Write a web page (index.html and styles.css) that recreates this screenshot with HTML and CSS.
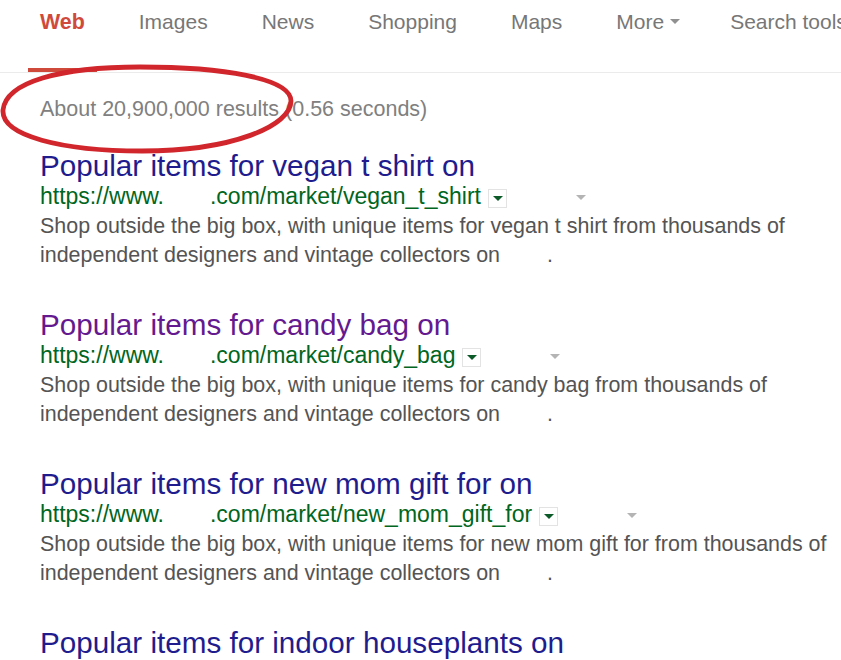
FILE: index.html
```html
<!DOCTYPE html>
<html lang="en">
<head>
    <meta charset="UTF-8">
    <meta name="viewport" content="width=device-width, initial-scale=1.0">
    <title>vegan t shirt - Search</title>
    <link rel="stylesheet" href="styles.css">
</head>
<body>
    <div class="tabs">
        <a class="tab selected">Web</a>
        <a class="tab">Images</a>
        <a class="tab">News</a>
        <a class="tab">Shopping</a>
        <a class="tab">Maps</a>
        <a class="tab more">More<span class="caret"></span></a>
        <a class="tab">Search tools</a>
    </div>

    <div class="results">
        <div class="stats">About 20,900,000 results (0.56 seconds)</div>

        <div class="result">
            <h3 class="title">Popular items for vegan t shirt on</h3>
            <div class="url">https://www.<span class="blank"></span>.com/market/vegan_t_shirt<span class="menu"><span class="arrow"></span></span><span class="gap"></span><span class="arrow light"></span></div>
            <p class="snippet">Shop outside the big box, with unique items for vegan t shirt from thousands of<br><span>independent designers and vintage collectors on</span><span class="blank"></span>.</p>
        </div>

        <div class="result">
            <h3 class="title visited">Popular items for candy bag on</h3>
            <div class="url">https://www.<span class="blank"></span>.com/market/candy_bag<span class="menu"><span class="arrow"></span></span><span class="gap"></span><span class="arrow light"></span></div>
            <p class="snippet">Shop outside the big box, with unique items for candy bag from thousands of<br><span>independent designers and vintage collectors on</span><span class="blank"></span>.</p>
        </div>

        <div class="result">
            <h3 class="title">Popular items for new mom gift for on</h3>
            <div class="url">https://www.<span class="blank"></span>.com/market/new_mom_gift_for<span class="menu"><span class="arrow"></span></span><span class="gap"></span><span class="arrow light"></span></div>
            <p class="snippet">Shop outside the big box, with unique items for new mom gift for from thousands of<br><span>independent designers and vintage collectors on</span><span class="blank"></span>.</p>
        </div>

        <div class="result">
            <h3 class="title">Popular items for indoor houseplants on</h3>
        </div>
    </div>

    <!-- hand drawn circle around the result count -->
    <svg class="scribble" width="841" height="660" viewBox="0 0 841 660">
        <path d="M3 110 C6 82 60 67 140 67 C222 67 291 78 291 101 C291 126 232 151 142 151 C62 151 1 136 3 110 Z"
              fill="none" stroke="#d0262c" stroke-width="4.8" stroke-linecap="round"/>
    </svg>
</body>
</html>
```

FILE: styles.css
```css
* {
    margin: 0;
    padding: 0;
    box-sizing: border-box;
}

body {
    font-family: "Liberation Sans", Arial, sans-serif;
    background: #fff;
    position: relative;
    overflow: hidden;
    height: 660px;
}

.tabs {
    display: flex;
    padding-left: 28px;
    border-bottom: 1px solid #ebebeb;
    white-space: nowrap;
}

.tab {
    display: block;
    height: 72px;
    padding: 0 12px;
    margin-right: 30px;
    font-size: 21px;
    line-height: 44px;
    color: #777;
}

.tab.selected {
    color: #d04a3c;
    font-weight: bold;
    font-size: 21.4px;
    border-bottom: 4px solid #d04a3c;
}

.tab.more {
    margin-right: 26px;
}

.caret {
    display: inline-block;
    margin-left: 6px;
    vertical-align: middle;
    border-top: 5px solid #909090;
    border-left: 5px solid transparent;
    border-right: 5px solid transparent;
    position: relative;
    top: -2px;
}

.results {
    padding-left: 40px;
}

.stats {
    margin-top: 21px;
    font-size: 21.5px;
    line-height: 30px;
    color: #808080;
}

.result {
    margin-top: 27px;
}

.result + .result {
    margin-top: 40px;
}

.title {
    font-size: 29.65px;
    font-weight: normal;
    line-height: 30px;
    color: #1f1c8e;
}

.title.visited {
    color: #65198f;
}

.url {
    font-size: 23px;
    line-height: 31px;
    color: #006621;
    white-space: nowrap;
}

.blank {
    display: inline-block;
    width: 46px;
}

.snippet .blank {
    width: 47px;
}

.menu {
    display: inline-block;
    width: 19px;
    height: 19px;
    margin-left: 7px;
    border: 1px solid #e3e3e3;
    vertical-align: -1px;
    text-align: center;
    line-height: 15px;
}

.arrow {
    display: inline-block;
    vertical-align: middle;
    border-top: 5px solid #0b5a28;
    border-left: 5px solid transparent;
    border-right: 5px solid transparent;
}

.arrow.light {
    border-top-color: #b4b4b4;
    vertical-align: 4px;
}

.gap {
    display: inline-block;
    width: 69px;
}

.snippet {
    font-size: 21.45px;
    line-height: 29px;
    color: #545454;
    white-space: nowrap;
}

.scribble {
    position: absolute;
    top: 0;
    left: 0;
    pointer-events: none;
}
```
